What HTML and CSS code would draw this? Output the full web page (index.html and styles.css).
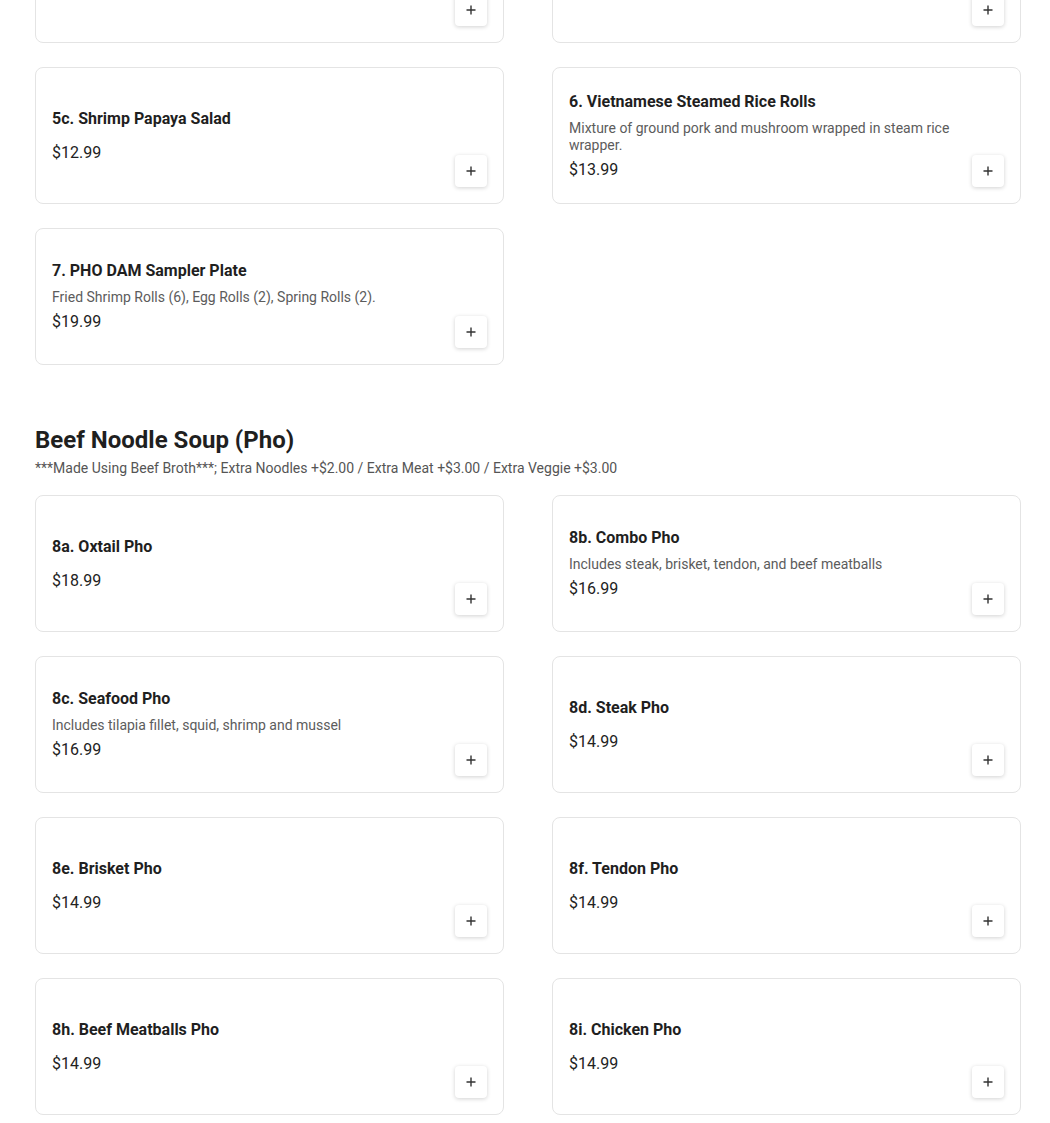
FILE: index.html
```html
<!DOCTYPE html>
<html lang="en">
<head>
<meta charset="utf-8">
<title>Menu</title>
<link rel="stylesheet" href="styles.css">
</head>
<body>
<main class="menu">
  <section class="section section-first">
    <div class="grid">
      <div class="card">
        <div class="info">
          <div class="title">5a. Papaya Salad</div>
          <div class="price">$11.99</div>
        </div>
        <button class="add" aria-label="Add"><svg viewBox="0 0 12 12" width="12" height="12"><path d="M6 1.5v9M1.5 6h9" stroke="#333" stroke-width="1.4" fill="none"/></svg></button>
      </div>
      <div class="card">
        <div class="info">
          <div class="title">5b. Chicken Papaya Salad</div>
          <div class="price">$12.99</div>
        </div>
        <button class="add" aria-label="Add"><svg viewBox="0 0 12 12" width="12" height="12"><path d="M6 1.5v9M1.5 6h9" stroke="#333" stroke-width="1.4" fill="none"/></svg></button>
      </div>
      <div class="card">
        <div class="info">
          <div class="title">5c. Shrimp Papaya Salad</div>
          <div class="price">$12.99</div>
        </div>
        <button class="add" aria-label="Add"><svg viewBox="0 0 12 12" width="12" height="12"><path d="M6 1.5v9M1.5 6h9" stroke="#333" stroke-width="1.4" fill="none"/></svg></button>
      </div>
      <div class="card">
        <div class="info">
          <div class="title">6. Vietnamese Steamed Rice Rolls</div>
          <div class="desc">Mixture of ground pork and mushroom wrapped in steam rice wrapper.</div>
          <div class="price">$13.99</div>
        </div>
        <button class="add" aria-label="Add"><svg viewBox="0 0 12 12" width="12" height="12"><path d="M6 1.5v9M1.5 6h9" stroke="#333" stroke-width="1.4" fill="none"/></svg></button>
      </div>
      <div class="card">
        <div class="info">
          <div class="title">7. PHO DAM Sampler Plate</div>
          <div class="desc">Fried Shrimp Rolls (6), Egg Rolls (2), Spring Rolls (2).</div>
          <div class="price">$19.99</div>
        </div>
        <button class="add" aria-label="Add"><svg viewBox="0 0 12 12" width="12" height="12"><path d="M6 1.5v9M1.5 6h9" stroke="#333" stroke-width="1.4" fill="none"/></svg></button>
      </div>
    </div>
  </section>

  <section class="section">
    <h2 class="section-title">Beef Noodle Soup (Pho)</h2>
    <p class="section-sub">***Made Using Beef Broth***; Extra Noodles +$2.00 / Extra Meat +$3.00 / Extra Veggie +$3.00</p>
    <div class="grid">
      <div class="card">
        <div class="info">
          <div class="title">8a. Oxtail Pho</div>
          <div class="price">$18.99</div>
        </div>
        <button class="add" aria-label="Add"><svg viewBox="0 0 12 12" width="12" height="12"><path d="M6 1.5v9M1.5 6h9" stroke="#333" stroke-width="1.4" fill="none"/></svg></button>
      </div>
      <div class="card">
        <div class="info">
          <div class="title">8b. Combo Pho</div>
          <div class="desc">Includes steak, brisket, tendon, and beef meatballs</div>
          <div class="price">$16.99</div>
        </div>
        <button class="add" aria-label="Add"><svg viewBox="0 0 12 12" width="12" height="12"><path d="M6 1.5v9M1.5 6h9" stroke="#333" stroke-width="1.4" fill="none"/></svg></button>
      </div>
      <div class="card">
        <div class="info">
          <div class="title">8c. Seafood Pho</div>
          <div class="desc">Includes tilapia fillet, squid, shrimp and mussel</div>
          <div class="price">$16.99</div>
        </div>
        <button class="add" aria-label="Add"><svg viewBox="0 0 12 12" width="12" height="12"><path d="M6 1.5v9M1.5 6h9" stroke="#333" stroke-width="1.4" fill="none"/></svg></button>
      </div>
      <div class="card">
        <div class="info">
          <div class="title">8d. Steak Pho</div>
          <div class="price">$14.99</div>
        </div>
        <button class="add" aria-label="Add"><svg viewBox="0 0 12 12" width="12" height="12"><path d="M6 1.5v9M1.5 6h9" stroke="#333" stroke-width="1.4" fill="none"/></svg></button>
      </div>
      <div class="card">
        <div class="info">
          <div class="title">8e. Brisket Pho</div>
          <div class="price">$14.99</div>
        </div>
        <button class="add" aria-label="Add"><svg viewBox="0 0 12 12" width="12" height="12"><path d="M6 1.5v9M1.5 6h9" stroke="#333" stroke-width="1.4" fill="none"/></svg></button>
      </div>
      <div class="card">
        <div class="info">
          <div class="title">8f. Tendon Pho</div>
          <div class="price">$14.99</div>
        </div>
        <button class="add" aria-label="Add"><svg viewBox="0 0 12 12" width="12" height="12"><path d="M6 1.5v9M1.5 6h9" stroke="#333" stroke-width="1.4" fill="none"/></svg></button>
      </div>
      <div class="card">
        <div class="info">
          <div class="title">8h. Beef Meatballs Pho</div>
          <div class="price">$14.99</div>
        </div>
        <button class="add" aria-label="Add"><svg viewBox="0 0 12 12" width="12" height="12"><path d="M6 1.5v9M1.5 6h9" stroke="#333" stroke-width="1.4" fill="none"/></svg></button>
      </div>
      <div class="card">
        <div class="info">
          <div class="title">8i. Chicken Pho</div>
          <div class="price">$14.99</div>
        </div>
        <button class="add" aria-label="Add"><svg viewBox="0 0 12 12" width="12" height="12"><path d="M6 1.5v9M1.5 6h9" stroke="#333" stroke-width="1.4" fill="none"/></svg></button>
      </div>
    </div>
  </section>
</main>
</body>
</html>
```

FILE: styles.css
```css
html, body {
  margin: 0;
  padding: 0;
  background: #ffffff;
}

body {
  font-family: Roboto, "Liberation Sans", Arial, sans-serif;
  color: #222222;
  overflow: hidden;
}

.menu {
  padding: 0 29px 40px 35px;
}

.section-first {
  margin-top: -94px;
}

.section + .section {
  margin-top: 59px;
}

.section-title {
  margin: 0;
  font-size: 24px;
  line-height: 32px;
  font-weight: 700;
  color: #1f1f1f;
}

.section-sub {
  margin: 2px 0 17px;
  font-size: 14px;
  line-height: 20px;
  color: #555555;
}

.grid {
  display: grid;
  grid-template-columns: 1fr 1fr;
  column-gap: 48px;
  row-gap: 24px;
}

.card {
  box-sizing: border-box;
  height: 137px;
  padding: 16px;
  border: 1px solid #e4e4e4;
  border-radius: 8px;
  background: #ffffff;
  display: flex;
  align-items: center;
  gap: 12px;
}

.info {
  flex: 1;
  display: flex;
  flex-direction: column;
}

.title {
  font-size: 16px;
  line-height: 24px;
  font-weight: 700;
  color: #1f1f1f;
  margin-bottom: 10px;
}

.desc {
  font-size: 14px;
  line-height: 17px;
  color: #5c5c5c;
  margin: -4px 0 4px;
}

.price {
  font-size: 16px;
  line-height: 24px;
  color: #222222;
}

.add {
  align-self: flex-end;
  flex: none;
  width: 32px;
  height: 32px;
  padding: 0;
  border: none;
  border-radius: 4px;
  background: #ffffff;
  box-shadow: 0 1px 4px rgba(0, 0, 0, 0.18);
  display: flex;
  align-items: center;
  justify-content: center;
}
```
